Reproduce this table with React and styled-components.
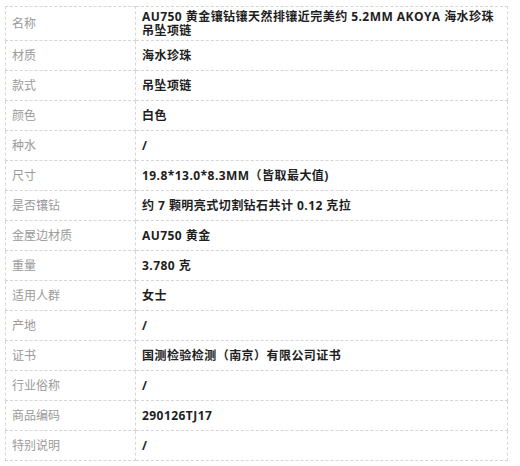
import styled, { createGlobalStyle } from "styled-components";

const GlobalStyle = createGlobalStyle`
  body {
    margin: 0;
    background: #fff;
    font-family: "Open Sans", "Noto Sans CJK SC", sans-serif;
  }
`;

const Page = styled.div`
  padding: 6px 12px 0 5px;
`;

const SpecTable = styled.table`
  width: 503px;
  border-collapse: collapse;
  table-layout: fixed;
  font-size: 12px;
`;

const Row = styled.tr`
  height: ${(p) => (p.$tall ? "34px" : "30px")};
`;

const Cell = styled.td`
  border: 1px dashed #d6d6d6;
  padding: 0 0 0 6px;
  vertical-align: middle;
  line-height: 14px;
`;

const Label = styled(Cell)`
  width: 123px;
  color: #9a9a9a;
`;

const Value = styled(Cell)`
  color: #1e1e1e;
  font-weight: 700;
  letter-spacing: 0.45px;
  padding-right: 4px;
`;

const specs = [
  ["名称", "AU750 黄金镶钻镶天然排镶近完美约 5.2MM AKOYA 海水珍珠吊坠项链"],
  ["材质", "海水珍珠"],
  ["款式", "吊坠项链"],
  ["颜色", "白色"],
  ["种水", "/"],
  ["尺寸", "19.8*13.0*8.3MM（皆取最大值)"],
  ["是否镶钻", "约 7 颗明亮式切割钻石共计 0.12 克拉"],
  ["金屋边材质", "AU750 黄金"],
  ["重量", "3.780 克"],
  ["适用人群", "女士"],
  ["产地", "/"],
  ["证书", "国测检验检测（南京）有限公司证书"],
  ["行业俗称", "/"],
  ["商品编码", "290126TJ17"],
  ["特别说明", "/"],
];

export default function App() {
  return (
    <>
      <GlobalStyle />
      <Page>
        <SpecTable>
          <tbody>
            {specs.map(([label, value], i) => (
              <Row key={label} $tall={i === 0}>
                <Label>{label}</Label>
                <Value>{value}</Value>
              </Row>
            ))}
          </tbody>
        </SpecTable>
      </Page>
    </>
  );
}
